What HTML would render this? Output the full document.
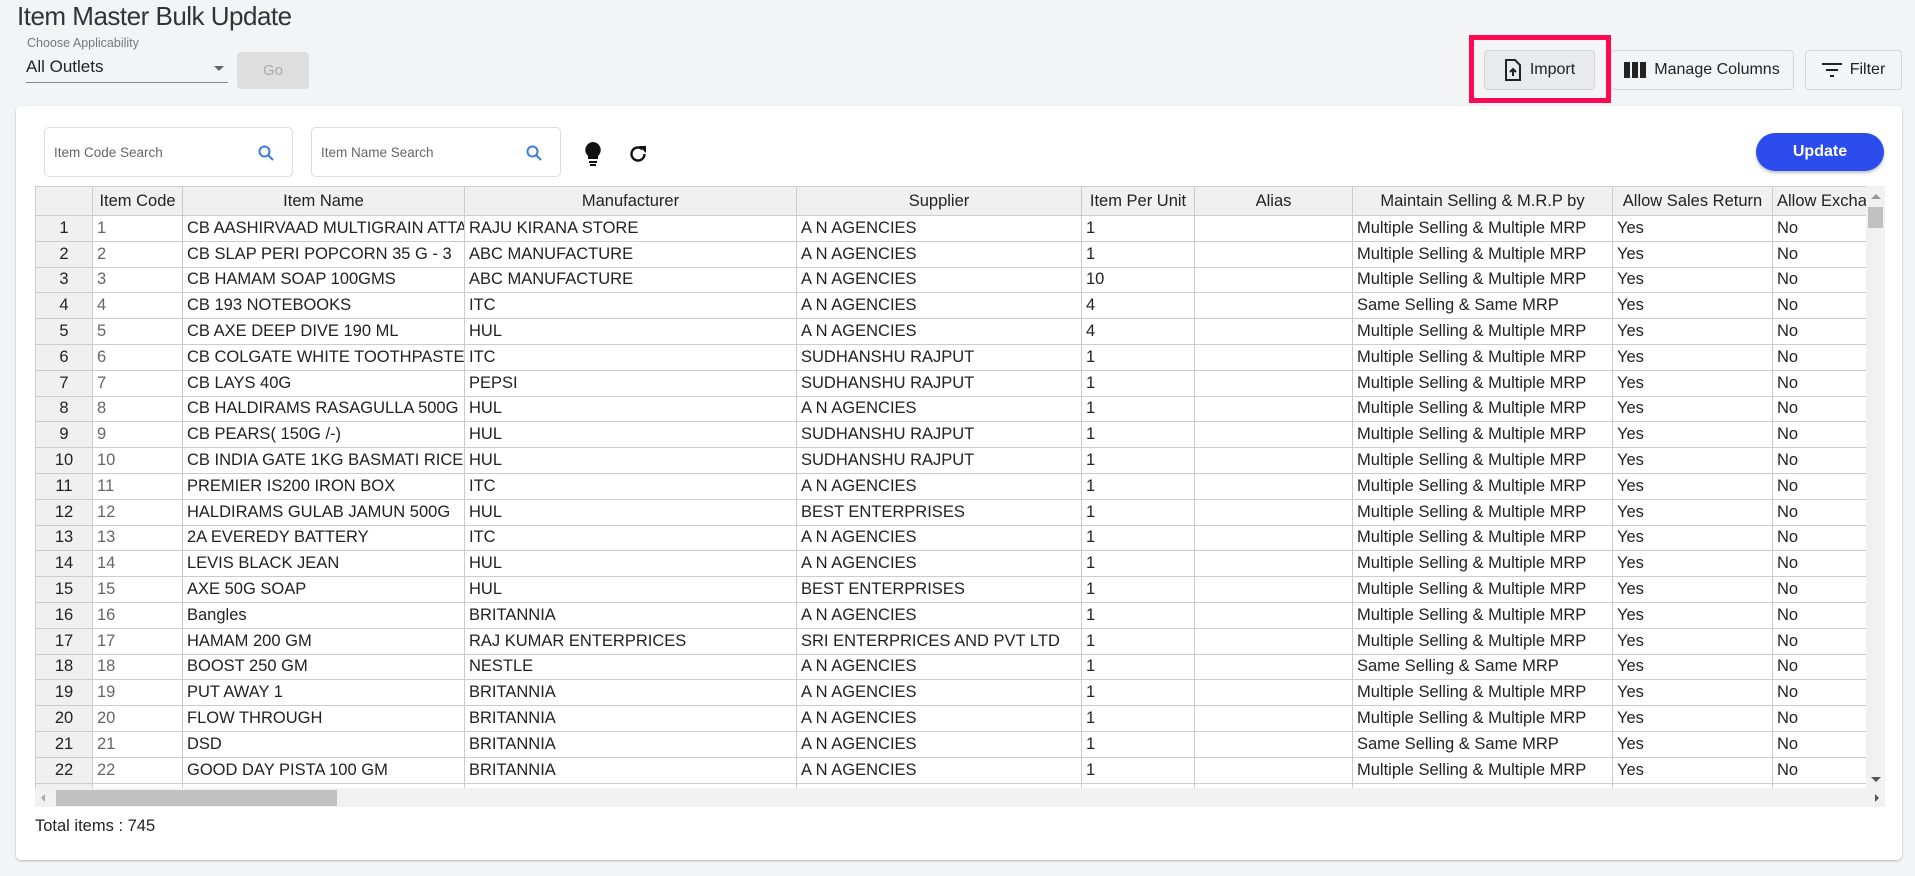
<!DOCTYPE html>
<html><head><meta charset="utf-8"><style>
*{box-sizing:border-box;margin:0;padding:0}
body{width:1915px;height:876px;background:#f3f4f6;font-family:"Liberation Sans",sans-serif;position:relative;overflow:hidden;color:#222}
.abs{position:absolute}
h1{position:absolute;left:17px;top:1px;font-size:26px;font-weight:normal;color:#333;letter-spacing:-0.5px}
.lbl{left:27px;top:36px;font-size:12.5px;color:#777}
.sel{left:26px;top:57px;width:202px;height:26px;border-bottom:1px solid #888;font-size:17px;color:#222}
.sel .ar{position:absolute;right:4px;top:9px;border-left:5px solid transparent;border-right:5px solid transparent;border-top:5px solid #666}
.go{left:237px;top:52px;width:72px;height:37px;background:#dedede;border-radius:4px;color:#aaa;font-size:15px;text-align:center;line-height:37px}
.btn{top:50px;height:40px;border:1px solid #d6d6d6;border-radius:4px;background:#f3f4f6;font-size:16px;color:#222;display:flex;align-items:center;justify-content:center;gap:8px}
.card{left:16px;top:106px;width:1886px;height:754px;background:#fff;border-radius:5px;box-shadow:0 1px 2px rgba(0,0,0,.25)}
.srch{top:127px;height:50px;border:1px solid #ddd;border-radius:5px;font-size:13.5px;color:#666;padding:17px 0 0 9px}
.srch svg{position:absolute;right:18px;top:17px}
.upd{left:1756px;top:133px;width:128px;height:38px;border-radius:19px;background:#2d4ced;color:#fff;font-weight:bold;font-size:16px;text-align:center;line-height:38px;box-shadow:0 2px 3px rgba(0,0,0,.25)}
.tw{left:35px;top:186px;width:1831px;height:602px;overflow:hidden}
table{border-collapse:collapse;table-layout:fixed;width:1900px;font-size:16.5px}
th{height:29px;background:#f0f0f0;font-weight:normal;border:1px solid #ccc;white-space:nowrap;overflow:hidden;color:#222}
td{height:25.8px;border:1px solid #ccc;white-space:nowrap;overflow:hidden;padding:0 4px;color:#222}
td.n{background:#f0f0f0;text-align:center}
td.c{color:#666}
.vs{left:1866px;top:186px;width:19px;height:602px;background:#f1f1f1}
.hs{left:35px;top:788px;width:1850px;height:19px;background:#f1f1f1}
</style></head><body>
<h1>Item Master Bulk Update</h1>
<div class="abs lbl">Choose Applicability</div>
<div class="abs sel">All Outlets<span class="ar"></span></div>
<div class="abs go">Go</div>

<div class="abs" style="left:1469px;top:35px;width:142px;height:68px;border:5px solid #ff0a52"></div>
<div class="abs btn" style="left:1484px;width:111px;background:#e9eaec">
<svg width="18" height="22" viewBox="0 0 18 22"><path d="M2 1h9l5 5v15H2z" fill="none" stroke="#222" stroke-width="2"/><path d="M9 17v-6M6 13l3-3 3 3" fill="none" stroke="#222" stroke-width="2"/></svg>Import</div>
<div class="abs btn" style="left:1611px;width:183px;border-left:none">
<svg width="22" height="18" viewBox="0 0 22 18"><rect x="0" y="1" width="6" height="16" fill="#222"/><rect x="8" y="1" width="6" height="16" fill="#222"/><rect x="16" y="1" width="6" height="16" fill="#222"/></svg>Manage Columns</div>
<div class="abs btn" style="left:1805px;width:97px">
<svg width="20" height="14" viewBox="0 0 20 14"><path d="M0 1h20M4 7h12M8 13h4" stroke="#222" stroke-width="2"/></svg>Filter</div>

<div class="abs card"></div>
<div class="abs srch" style="left:44px;width:249px">Item Code Search<svg width="16" height="16" viewBox="0 0 16 16"><circle cx="6.5" cy="6.5" r="5" fill="none" stroke="#3a7be0" stroke-width="2"/><path d="M10 10l5 5" stroke="#3a7be0" stroke-width="2"/></svg></div>
<div class="abs srch" style="left:311px;width:250px">Item Name Search<svg width="16" height="16" viewBox="0 0 16 16"><circle cx="6.5" cy="6.5" r="5" fill="none" stroke="#3a7be0" stroke-width="2"/><path d="M10 10l5 5" stroke="#3a7be0" stroke-width="2"/></svg></div>
<svg class="abs" style="left:584px;top:141px" width="18" height="25" viewBox="0 0 18 25"><path d="M9 1a8 8 0 0 0-5 14v3h10v-3A8 8 0 0 0 9 1z" fill="#111"/><rect x="5" y="20" width="8" height="2" fill="#111"/><rect x="6" y="23" width="6" height="2" fill="#111"/></svg>
<svg class="abs" style="left:627px;top:143px" width="22" height="22" viewBox="0 0 22 22"><path d="M17.5 11a6.5 6.5 0 1 1-2-4.7" fill="none" stroke="#111" stroke-width="2.4"/><path d="M12 3h7v7z" fill="#111"/></svg>
<div class="abs upd">Update</div>

<div class="abs tw"><table>
<colgroup><col style="width:57px"><col style="width:90px"><col style="width:282px"><col style="width:332px"><col style="width:285px"><col style="width:113px"><col style="width:158px"><col style="width:260px"><col style="width:160px"><col style="width:163px"></colgroup>
<tr><th></th><th>Item Code</th><th>Item Name</th><th>Manufacturer</th><th>Supplier</th><th>Item Per Unit</th><th>Alias</th><th>Maintain Selling &amp; M.R.P by</th><th>Allow Sales Return</th><th style="text-align:left;padding-left:4px">Allow Exchange</th></tr>
<tr><td class="n">1</td><td class="c">1</td><td>CB AASHIRVAAD MULTIGRAIN ATTA</td><td>RAJU KIRANA STORE</td><td>A N AGENCIES</td><td>1</td><td></td><td>Multiple Selling &amp; Multiple MRP</td><td>Yes</td><td>No</td></tr>
<tr><td class="n">2</td><td class="c">2</td><td>CB SLAP PERI POPCORN 35 G - 3</td><td>ABC MANUFACTURE</td><td>A N AGENCIES</td><td>1</td><td></td><td>Multiple Selling &amp; Multiple MRP</td><td>Yes</td><td>No</td></tr>
<tr><td class="n">3</td><td class="c">3</td><td>CB HAMAM SOAP 100GMS</td><td>ABC MANUFACTURE</td><td>A N AGENCIES</td><td>10</td><td></td><td>Multiple Selling &amp; Multiple MRP</td><td>Yes</td><td>No</td></tr>
<tr><td class="n">4</td><td class="c">4</td><td>CB 193 NOTEBOOKS</td><td>ITC</td><td>A N AGENCIES</td><td>4</td><td></td><td>Same Selling &amp; Same MRP</td><td>Yes</td><td>No</td></tr>
<tr><td class="n">5</td><td class="c">5</td><td>CB AXE DEEP DIVE 190 ML</td><td>HUL</td><td>A N AGENCIES</td><td>4</td><td></td><td>Multiple Selling &amp; Multiple MRP</td><td>Yes</td><td>No</td></tr>
<tr><td class="n">6</td><td class="c">6</td><td>CB COLGATE WHITE TOOTHPASTE</td><td>ITC</td><td>SUDHANSHU RAJPUT</td><td>1</td><td></td><td>Multiple Selling &amp; Multiple MRP</td><td>Yes</td><td>No</td></tr>
<tr><td class="n">7</td><td class="c">7</td><td>CB LAYS 40G</td><td>PEPSI</td><td>SUDHANSHU RAJPUT</td><td>1</td><td></td><td>Multiple Selling &amp; Multiple MRP</td><td>Yes</td><td>No</td></tr>
<tr><td class="n">8</td><td class="c">8</td><td>CB HALDIRAMS RASAGULLA 500G</td><td>HUL</td><td>A N AGENCIES</td><td>1</td><td></td><td>Multiple Selling &amp; Multiple MRP</td><td>Yes</td><td>No</td></tr>
<tr><td class="n">9</td><td class="c">9</td><td>CB PEARS( 150G /-)</td><td>HUL</td><td>SUDHANSHU RAJPUT</td><td>1</td><td></td><td>Multiple Selling &amp; Multiple MRP</td><td>Yes</td><td>No</td></tr>
<tr><td class="n">10</td><td class="c">10</td><td>CB INDIA GATE 1KG BASMATI RICE</td><td>HUL</td><td>SUDHANSHU RAJPUT</td><td>1</td><td></td><td>Multiple Selling &amp; Multiple MRP</td><td>Yes</td><td>No</td></tr>
<tr><td class="n">11</td><td class="c">11</td><td>PREMIER IS200 IRON BOX</td><td>ITC</td><td>A N AGENCIES</td><td>1</td><td></td><td>Multiple Selling &amp; Multiple MRP</td><td>Yes</td><td>No</td></tr>
<tr><td class="n">12</td><td class="c">12</td><td>HALDIRAMS GULAB JAMUN 500G</td><td>HUL</td><td>BEST ENTERPRISES</td><td>1</td><td></td><td>Multiple Selling &amp; Multiple MRP</td><td>Yes</td><td>No</td></tr>
<tr><td class="n">13</td><td class="c">13</td><td>2A EVEREDY BATTERY</td><td>ITC</td><td>A N AGENCIES</td><td>1</td><td></td><td>Multiple Selling &amp; Multiple MRP</td><td>Yes</td><td>No</td></tr>
<tr><td class="n">14</td><td class="c">14</td><td>LEVIS BLACK JEAN</td><td>HUL</td><td>A N AGENCIES</td><td>1</td><td></td><td>Multiple Selling &amp; Multiple MRP</td><td>Yes</td><td>No</td></tr>
<tr><td class="n">15</td><td class="c">15</td><td>AXE 50G SOAP</td><td>HUL</td><td>BEST ENTERPRISES</td><td>1</td><td></td><td>Multiple Selling &amp; Multiple MRP</td><td>Yes</td><td>No</td></tr>
<tr><td class="n">16</td><td class="c">16</td><td>Bangles</td><td>BRITANNIA</td><td>A N AGENCIES</td><td>1</td><td></td><td>Multiple Selling &amp; Multiple MRP</td><td>Yes</td><td>No</td></tr>
<tr><td class="n">17</td><td class="c">17</td><td>HAMAM 200 GM</td><td>RAJ KUMAR ENTERPRICES</td><td>SRI ENTERPRICES AND PVT LTD</td><td>1</td><td></td><td>Multiple Selling &amp; Multiple MRP</td><td>Yes</td><td>No</td></tr>
<tr><td class="n">18</td><td class="c">18</td><td>BOOST 250 GM</td><td>NESTLE</td><td>A N AGENCIES</td><td>1</td><td></td><td>Same Selling &amp; Same MRP</td><td>Yes</td><td>No</td></tr>
<tr><td class="n">19</td><td class="c">19</td><td>PUT AWAY 1</td><td>BRITANNIA</td><td>A N AGENCIES</td><td>1</td><td></td><td>Multiple Selling &amp; Multiple MRP</td><td>Yes</td><td>No</td></tr>
<tr><td class="n">20</td><td class="c">20</td><td>FLOW THROUGH</td><td>BRITANNIA</td><td>A N AGENCIES</td><td>1</td><td></td><td>Multiple Selling &amp; Multiple MRP</td><td>Yes</td><td>No</td></tr>
<tr><td class="n">21</td><td class="c">21</td><td>DSD</td><td>BRITANNIA</td><td>A N AGENCIES</td><td>1</td><td></td><td>Same Selling &amp; Same MRP</td><td>Yes</td><td>No</td></tr>
<tr><td class="n">22</td><td class="c">22</td><td>GOOD DAY PISTA 100 GM</td><td>BRITANNIA</td><td>A N AGENCIES</td><td>1</td><td></td><td>Multiple Selling &amp; Multiple MRP</td><td>Yes</td><td>No</td></tr>
<tr><td class="n">23</td><td class="c">23</td><td>VIM BAR</td><td>HUL</td><td>RV Suppliers</td><td>12</td><td>@@</td><td>Multiple Selling &amp; Multiple MRP</td><td>Yes</td><td>No</td></tr>
</table></div>
<div class="abs vs"><div class="abs" style="left:5px;top:8px;border-left:5px solid transparent;border-right:5px solid transparent;border-bottom:5px solid #999"></div><div class="abs" style="left:2px;top:21px;width:15px;height:21px;background:#c1c1c1"></div><div class="abs" style="left:5px;bottom:6px;border-left:5px solid transparent;border-right:5px solid transparent;border-top:5px solid #555"></div></div>
<div class="abs hs"><div class="abs" style="left:6px;top:6px;border-top:4px solid transparent;border-bottom:4px solid transparent;border-right:4px solid #aaa"></div><div class="abs" style="left:21px;top:2px;width:281px;height:16px;background:#c1c1c1"></div><div class="abs" style="right:6px;top:6px;border-top:4px solid transparent;border-bottom:4px solid transparent;border-left:4px solid #555"></div></div>
<div class="abs" style="left:35px;top:817px;font-size:16.5px;color:#222">Total items : 745</div>
</body></html>
